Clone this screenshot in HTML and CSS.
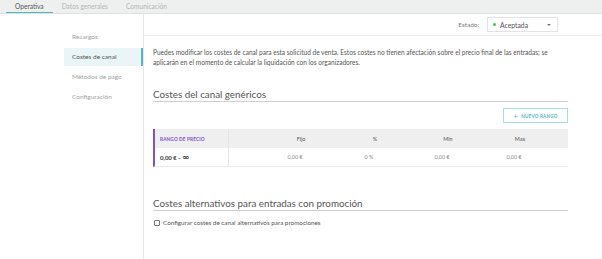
FILE: index.html
```html
<!DOCTYPE html>
<html lang="es">
<head>
<meta charset="utf-8">
<title>Costes de canal</title>
<link rel="stylesheet" href="styles.css">
</head>
<body>
<div class="topbar">
  <div class="tab active">Operativa</div>
  <div class="tab">Datos generales</div>
  <div class="tab">Comunicación</div>
</div>
<div class="layout">
  <nav class="sidebar">
    <div class="nav-item">Recargos</div>
    <div class="nav-item active">Costes de canal</div>
    <div class="nav-item">Métodos de pago</div>
    <div class="nav-item">Configuración</div>
  </nav>
  <main class="main">
    <div class="statusbar">
      <span class="status-label">Estado:</span>
      <div class="select">
        <span class="dot"></span>
        <span class="select-text">Aceptada</span>
        <span class="caret"></span>
      </div>
    </div>
    <div class="content">
      <p class="intro">Puedes modificar los costes de canal para esta solicitud de venta. Estos costes no tienen afectación sobre el precio final de las entradas; se aplicarán en el momento de calcular la liquidación con los organizadores.</p>
      <h2 class="section-title">Costes del canal genéricos</h2>
      <div class="actions">
        <button class="btn-outline"><span class="plus">+</span>NUEVO RANGO</button>
      </div>
      <div class="table">
        <div class="row head">
          <div class="cell first range-head">RANGO DE PRECIO</div>
          <div class="cell"></div>
          <div class="cell c">Fijo</div>
          <div class="cell c">%</div>
          <div class="cell c">Min</div>
          <div class="cell c">Max</div>
          <div class="cell"></div>
        </div>
        <div class="row body">
          <div class="cell first range">0,00 € - <span class="inf">∞</span></div>
          <div class="cell"></div>
          <div class="cell c val shift">0,00 €</div>
          <div class="cell c val shift">0 %</div>
          <div class="cell c val shift">0,00 €</div>
          <div class="cell c val shift">0,00 €</div>
          <div class="cell"></div>
        </div>
      </div>
      <h2 class="section-title second">Costes alternativos para entradas con promoción</h2>
      <label class="check-row"><span class="checkbox"></span>Configurar costes de canal alternativos para promociones</label>
    </div>
  </main>
</div>
</body>
</html>
```

FILE: styles.css
```css
* { box-sizing: border-box; }
html, body {
  margin: 0;
  padding: 0;
  width: 602px;
  height: 259px;
  overflow: hidden;
  background: #fff;
  font-family: Lato, "Open Sans", sans-serif;
  color: #555;
}

.topbar {
  height: 14px;
  background: #eef0ef;
  border-bottom: 1px solid #dfe1e0;
  display: flex;
  padding-left: 6px;
}
.tab {
  height: 13px;
  padding: 0 9px;
  font-size: 6.6px;
  line-height: 13px;
  color: #b3b5b4;
}
.tab.active {
  color: #555;
  border-bottom: 1px solid #4fb8c4;
  line-height: 12px;
}

.layout {
  display: flex;
  height: 245px;
}
.sidebar {
  width: 144px;
  border-right: 1px solid #e6e6e6;
  padding-top: 13px;
  display: flex;
  flex-direction: column;
  align-items: flex-end;
}
.nav-item {
  width: 79px;
  height: 20px;
  line-height: 20px;
  padding-left: 8px;
  font-size: 6.5px;
  color: #a3a3a3;
}
.nav-item.active {
  background: #e9f5f7;
  color: #555;
  border-right: 2px solid #4fb8c4;
  height: 18px;
  line-height: 18px;
  margin: 1px 0;
}

.main {
  flex: 1;
}
.statusbar {
  height: 22px;
  border-bottom: 1px solid #ececec;
  display: flex;
  justify-content: flex-end;
  align-items: center;
  padding-right: 44px;
  gap: 8px;
}
.status-label {
  font-size: 6.4px;
  color: #777;
}
.select {
  width: 71px;
  height: 15px;
  border: 1px solid #e3e3e3;
  box-shadow: 0 0 1px rgba(0,0,0,0.08);
  display: flex;
  align-items: center;
  padding-left: 5px;
  padding-right: 6px;
}
.dot {
  width: 3px;
  height: 3px;
  border-radius: 50%;
  background: #38c75a;
  margin-right: 4px;
}
.select-text {
  flex: 1;
  font-size: 6.8px;
  color: #555;
}
.caret {
  width: 0;
  height: 0;
  border-left: 2px solid transparent;
  border-right: 2px solid transparent;
  border-top: 2px solid #777;
}

.content {
  padding: 12px 34px 0 9px;
}
.intro {
  margin: 0;
  font-size: 6.55px;
  line-height: 9.5px;
  color: #555;
}
.section-title {
  margin: 20px 0 0;
  font-weight: 400;
  font-size: 9.8px;
  line-height: 14px;
  color: #555;
  border-bottom: 1px solid #cfcfcf;
}
.section-title.second {
  margin-top: 29px;
}
.actions {
  display: flex;
  justify-content: flex-end;
  margin-top: 6px;
}
.btn-outline {
  width: 65px;
  height: 15px;
  padding: 0;
  background: #fff;
  border: 1px solid #a9dde3;
  color: #4fb8c4;
  font-family: Lato, sans-serif;
  font-weight: 700;
  font-size: 4.6px;
  letter-spacing: 0.2px;
  display: flex;
  align-items: center;
  justify-content: center;
}
.plus {
  font-size: 8px;
  font-weight: 400;
  margin-right: 3px;
  line-height: 1;
}

.table {
  margin-top: 6px;
  border-left: 2px solid #7b52d3;
  border-bottom: 1px solid #ececec;
}
.row {
  display: grid;
  grid-template-columns: 74px 36px 72px 76px 70px 74px 1fr;
  align-items: center;
}
.row.head {
  height: 19px;
  background: #efefef;
}
.row.body {
  height: 18px;
}
.cell {
  height: 100%;
  display: flex;
  align-items: center;
  font-size: 5.4px;
  color: #555;
}
.cell.c { justify-content: center; }
.cell.first {
  border-right: 1px solid #e4e4e4;
  padding-left: 5px;
}
.range-head {
  color: #7b52d3;
  font-weight: 700;
  font-size: 4.7px;
  letter-spacing: 0.15px;
}
.range {
  font-weight: 700;
  font-size: 6px;
  color: #333;
  white-space: pre;
}
.inf {
  font-family: "DejaVu Sans", sans-serif;
  font-size: 8.5px;
  font-weight: 700;
  line-height: 1;
}
.val { color: #888; }
.shift { padding-right: 12px; }

.check-row {
  display: flex;
  align-items: center;
  margin-top: 8px;
  font-size: 6.3px;
  color: #555;
}
.checkbox {
  width: 6px;
  height: 6px;
  border: 1px solid #777;
  border-radius: 1px;
  margin: 0 3px 0 1px;
}
```
